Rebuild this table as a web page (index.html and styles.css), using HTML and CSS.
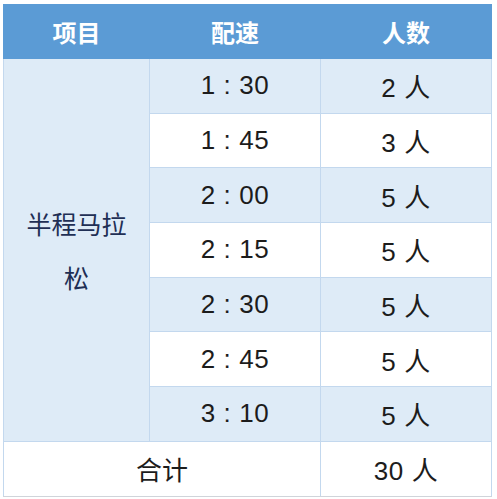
FILE: index.html
```html
<!DOCTYPE html>
<html lang="zh">
<head>
<meta charset="utf-8">
<link rel="stylesheet" href="styles.css">
</head>
<body>
<table class="pace-table">
  <colgroup>
    <col class="c1"><col class="c2"><col class="c3">
  </colgroup>
  <thead>
    <tr class="head"><th>项目</th><th>配速</th><th>人数</th></tr>
  </thead>
  <tbody>
    <tr class="alt"><td class="item" rowspan="7">半程马拉松</td><td>1 : 30</td><td>2 人</td></tr>
    <tr><td>1 : 45</td><td>3 人</td></tr>
    <tr class="alt"><td>2 : 00</td><td>5 人</td></tr>
    <tr><td>2 : 15</td><td>5 人</td></tr>
    <tr class="alt"><td>2 : 30</td><td>5 人</td></tr>
    <tr><td>2 : 45</td><td>5 人</td></tr>
    <tr class="alt"><td>3 : 10</td><td>5 人</td></tr>
    <tr class="total"><td colspan="2">合计</td><td>30 人</td></tr>
  </tbody>
</table>
</body>
</html>
```
FILE: styles.css
```css
html, body {
  margin: 0;
  padding: 0;
  background: #ffffff;
}
body {
  padding: 4px 0 0 3px;
  font-family: "Liberation Sans", "Noto Sans CJK SC", sans-serif;
}
.pace-table {
  border-collapse: collapse;
  table-layout: fixed;
  width: 488px;
  font-size: 26px;
  letter-spacing: 0.6px;
  color: #1c1c1c;
}
.c1 { width: 146px; }
.c2 { width: 171px; }
.c3 { width: 171px; }
.pace-table th,
.pace-table td {
  text-align: center;
  vertical-align: middle;
  padding: 0;
  border: 1px solid #c3d8ee;
}
.head th {
  height: 53px;
  background: #5b9bd5;
  color: #ffffff;
  font-family: "Noto Sans CJK SC", sans-serif;
  font-weight: 700;
  font-size: 24px;
  letter-spacing: 0;
  border-color: #5b9bd5;
}
.pace-table tbody td {
  height: 53.7px;
}
.pace-table tbody tr td + td,
.pace-table .total td:last-child {
  border-left-color: #a9c7e8;
}
.alt td { background: #deebf7; }
.item {
  background: #deebf7;
  color: #1f2f55;
  font-family: "Noto Sans CJK SC", sans-serif;
  font-size: 25px;
  letter-spacing: 0;
  line-height: 54px;
  padding: 0 18px !important;
}
.total td {
  background: #ffffff;
  border-bottom-color: #d0d4da;
}
.total td:first-child {
  font-family: "Noto Sans CJK SC", sans-serif;
  letter-spacing: 0;
}
```
